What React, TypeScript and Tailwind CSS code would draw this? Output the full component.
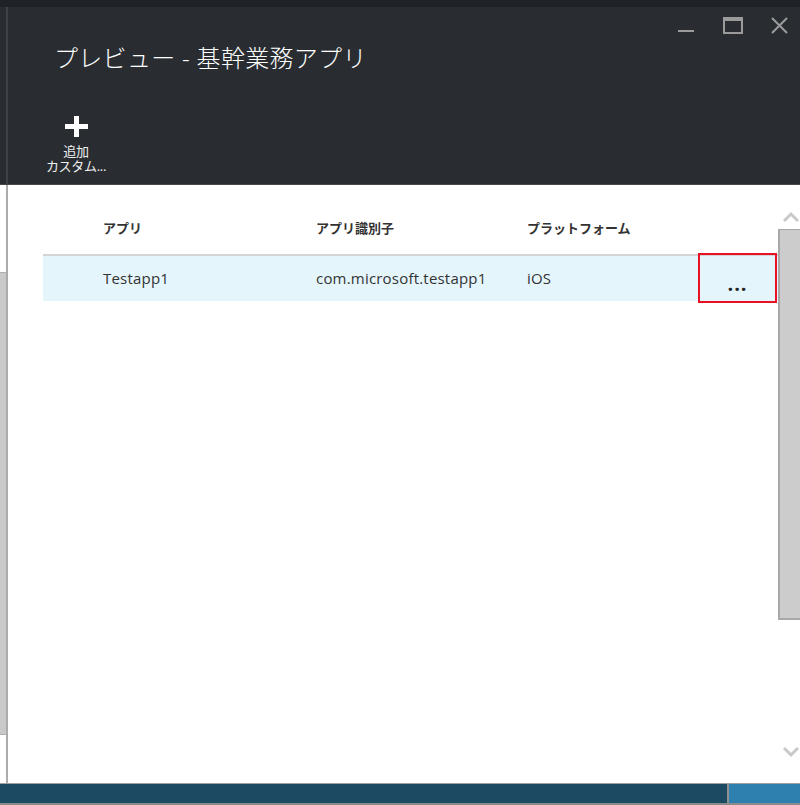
import React from "react";

const font = '"Segoe UI", "Open Sans", "Noto Sans CJK JP", sans-serif';

export default function App() {
  return (
    <div
      className="w-[800px] h-[805px] overflow-hidden flex flex-col bg-white"
      style={{ fontFamily: font }}
    >
      <div className="h-[7px] bg-[#1f2327] shrink-0" />
      <div className="flex-1 flex min-h-0">
        {/* left sliver of previous blade */}
        <div className="w-[6px] flex flex-col shrink-0">
          <div className="h-[178px] bg-[#292d32] border-b border-[#45494e]" />
          <div className="flex-1 flex flex-col bg-white">
            <div className="h-[87px]" />
            <div className="h-[463px] bg-[#c9c9c9] border-t border-b border-[#b0b0b0]" />
            <div className="flex-1" />
          </div>
        </div>
        <div className="w-[2px] flex flex-col shrink-0">
          <div className="h-[178px] bg-[#3d4247]" />
          <div className="flex-1 bg-[#ababab]" />
        </div>
        {/* main blade */}
        <div className="flex-1 flex flex-col min-w-0">
          <div className="h-[178px] bg-[#292d32] border-b border-[#45494e] relative shrink-0 text-white">
            <div className="absolute right-[12px] top-[10px] flex items-start gap-[28px] text-[#9b9b9b]">
              <svg width="17" height="17" viewBox="0 0 17 17">
                <rect x="0" y="13" width="16" height="2" fill="#9b9b9b" />
              </svg>
              <svg width="20" height="17" viewBox="0 0 20 17">
                <rect x="1" y="1" width="18" height="15" fill="none" stroke="#9b9b9b" strokeWidth="2" />
                <rect x="1" y="1" width="18" height="3" fill="#9b9b9b" />
              </svg>
              <svg width="17" height="17" viewBox="0 0 17 17">
                <path d="M1 1 L16 16 M16 1 L1 16" stroke="#9b9b9b" strokeWidth="2" />
              </svg>
            </div>
            <div className="pl-[46px] pt-[35px] text-[24px] leading-[32px] font-light tracking-[0.3px]">
              プレビュー - 基幹業務アプリ
            </div>
            <div className="mt-[42px] ml-[30px] w-[76px] flex flex-col items-center">
              <svg width="23" height="21" viewBox="0 0 23 21">
                <rect x="9" y="0" width="5" height="21" fill="#fff" />
                <rect x="0" y="8" width="23" height="5" fill="#fff" />
              </svg>
              <div className="mt-[7px] text-[13px] leading-[15px] text-center text-[#f0f0f0] whitespace-nowrap tracking-[-0.3px]">
                追加
              </div>
              <div className="text-[13px] leading-[15px] text-center text-[#f0f0f0] whitespace-nowrap tracking-[-0.3px]">
                カスタム...
              </div>
            </div>
          </div>
          <div className="flex-1 flex min-h-0">
            <div className="flex-1 pl-[35px] pt-[34px] min-w-0">
              <div>
                <div className="flex h-[35px] items-start text-[13px] font-bold text-[#333]">
                  <div className="w-[273px] pl-[60px]">アプリ</div>
                  <div className="w-[211px]">アプリ識別子</div>
                  <div>プラットフォーム</div>
                </div>
                <div className="h-[2px] bg-[#d4d4d4]" />
                <div className="flex h-[45px] items-center bg-[#e4f5fc] text-[15px] text-[#333] relative tracking-[0.2px]">
                  <div className="w-[273px] pl-[60px]">Testapp1</div>
                  <div className="w-[211px]">com.microsoft.testapp1</div>
                  <div>iOS</div>
                  <div className="absolute left-[655px] top-[-3px] w-[79px] h-[50px] border-2 border-[#e81123] flex items-end justify-center pb-[12px]">
                    <span className="text-[20px] leading-[10px] font-bold tracking-[1px] text-[#222]">...</span>
                  </div>
                </div>
              </div>
            </div>
            {/* scrollbar */}
            <div className="w-[22px] flex flex-col shrink-0">
              <div className="h-[44px] flex items-end justify-center pb-[7px] pl-[4px]">
                <svg width="16" height="11" viewBox="0 0 16 11">
                  <path d="M1 10 L8 3 L15 10" fill="none" stroke="#c8c8c8" strokeWidth="3" />
                </svg>
              </div>
              <div className="h-[391px] bg-[#cccccc] border-l-2 border-b-2 border-t border-[#a8a8a8]" />
              <div className="flex-1 flex flex-col items-center pt-[127px] pl-[4px]">
                <svg width="16" height="11" viewBox="0 0 16 11">
                  <path d="M1 1 L8 8 L15 1" fill="none" stroke="#c8c8c8" strokeWidth="3" />
                </svg>
              </div>
            </div>
          </div>
        </div>
      </div>
      <div className="h-[22px] flex shrink-0 border-t border-[#a0a0a0] border-b-2 border-b-[#8a8a8a]">
        <div className="w-[729px] bg-[#1c4a63] border-r-2 border-[#8f8f8f]" />
        <div className="flex-1 bg-[#2e80ae]" />
      </div>
    </div>
  );
}
